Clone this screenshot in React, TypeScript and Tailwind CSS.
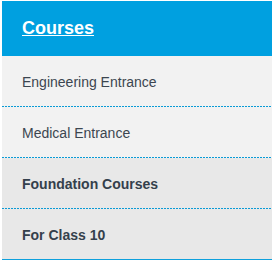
const items = [
  { label: "Engineering Entrance", bold: false },
  { label: "Medical Entrance", bold: false },
  { label: "Foundation Courses", bold: true },
  { label: "For Class 10", bold: true },
];

export default function App() {
  return (
    <div className="pl-[2px] pt-px font-['Liberation_Sans',Arial,sans-serif]">
      <div className="w-[270px] border-b-2 border-[#0ea0dc]">
        <div className="flex h-[55px] items-center bg-[#00a0e0] px-5 pb-px">
          <a href="#" className="text-[18px] font-bold text-white underline">
            Courses
          </a>
        </div>
        {items.map((item, i) => (
          <div
            key={item.label}
            className={`flex items-center px-5 pt-[2px] text-[14px] ${
              item.bold ? "bg-[#e8e8e8] font-bold text-[#34404c]" : "bg-[#f2f2f2] text-[#3c4650]"
            } ${
              i < items.length - 1
                ? "h-[51px] bg-[repeating-linear-gradient(to_right,#0a9bd6_0px,#0a9bd6_2px,transparent_2px,transparent_3px)] bg-[length:100%_1px] bg-bottom bg-no-repeat"
                : "h-[50px]"
            }`}
          >
            {item.label}
          </div>
        ))}
      </div>
    </div>
  );
}
